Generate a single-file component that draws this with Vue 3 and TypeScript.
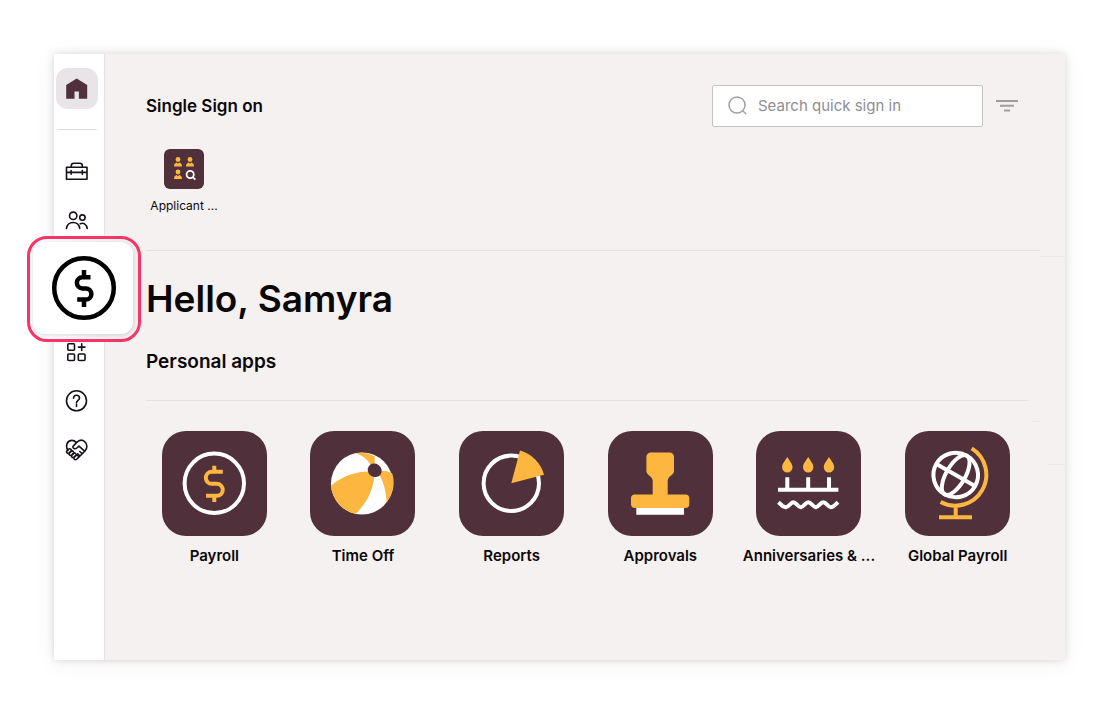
<script setup lang="ts">
import { ref } from 'vue'

interface AppTile {
  id: string
  label: string
}

const query = ref('')

const apps: AppTile[] = [
  { id: 'payroll', label: 'Payroll' },
  { id: 'timeoff', label: 'Time Off' },
  { id: 'reports', label: 'Reports' },
  { id: 'approvals', label: 'Approvals' },
  { id: 'anniversaries', label: 'Anniversaries & ...' },
  { id: 'global', label: 'Global Payroll' },
]
</script>

<template>
  <div class="page">
    <div class="window">
      <nav class="sidebar" aria-label="Main">
        <button class="home" type="button" aria-label="Home">
          <svg viewBox="0 0 24 24" class="icon"><path class="solid" d="M1.2 8 11.700 1.500 22.200 8v13.800h-8.300v-7.400H9.500v7.400H1.200z" /></svg>
        </button>
        <hr class="nav-rule" />
        <button class="nav-item" type="button" aria-label="Tools">
          <svg viewBox="0 0 24 24" class="icon"><path d="M1.500 8.300h20.500v11.900H1.500zM6.300 8.100V6.800c0-1.500 1-2.500 2.500-2.500h6c1.500 0 2.500 1 2.500 2.500v1.300M1.500 13.400h20.500M6.100 11.500v3.800M17.300 11.500v3.800" /></svg>
        </button>
        <button class="nav-item" type="button" aria-label="People">
          <svg viewBox="0 0 24 24" class="icon"><circle cx="8.200" cy="7.800" r="3.700" /><circle cx="17.400" cy="9.600" r="2.700" /><path d="M1.500 20.500c.5-3.800 3-6 6.600-6s6.100 2.200 6.600 6M15.200 15.800c3.500-1.500 6.500.6 7 4.700" /></svg>
        </button>
        <div class="focus-slot">
          <div class="focus-ring">
            <button class="focus-card" type="button" aria-label="Pay">
              <svg viewBox="0 0 68 68" class="pay-icon">
                <circle cx="34" cy="34" r="29.800" />
                <path d="M40.500 23.200H32.500a5.600 5.600 0 0 0 0 11.200h3.300a5.600 5.600 0 0 1 0 11.200H27.200M34 16v7M34 46v7" />
              </svg>
            </button>
          </div>
        </div>
        <button class="nav-item" type="button" aria-label="Add apps">
          <svg viewBox="0 0 24 24" class="icon"><rect x="2.800" y="3.800" width="6.700" height="6.500" rx="1" /><rect x="2.800" y="14" width="6.700" height="6.500" rx="1" /><rect x="13.300" y="14" width="6.700" height="6.500" rx="1" /><path d="M16.700 3.800v6.600M13.400 7.100h6.600" /></svg>
        </button>
        <button class="nav-item" type="button" aria-label="Help">
          <svg viewBox="0 0 24 24" class="icon"><circle cx="11.500" cy="11.800" r="10" /><path d="M8.500 9.300c0-1.900 1.200-3 3-3s3 1.100 3 2.700c0 2.200-3 2.400-3 4.900M11.500 15.600v1.900" /></svg>
        </button>
        <button class="nav-item" type="button" aria-label="Community">
          <svg viewBox="0 0 24 24" class="icon">
            <path d="M3 12.300C.2 8.500 1.700 3 6.500 2.400c2-.1 3.600.7 5 2.200 2.600-2.700 5.700-3 8.200-1 3 2.600 2.700 6.900.3 9.400l-6.200 6.200M11.500 4.600 8 8.400c-.6 1.900 2 3.200 3.800 1.600l2.200-1.900 5.800 5.200M17.300 15.800l-2.500-2.300M15 18l-2.300-2.200" />
            <g v-for="n in 4" :key="n" :transform="`translate(${1.600 + n * 2.400} ${11 + n * 2.100}) rotate(-45)`">
              <rect x="-2.600" y="-1.600" width="5.200" height="3.200" rx="1.600" />
            </g>
          </svg>
        </button>
      </nav>

      <main class="main">
        <section class="sso">
          <header class="sso-head">
            <h2 class="sso-title">Single Sign on</h2>
            <label class="search">
              <svg viewBox="0 0 22 22" class="search-icon"><circle cx="10" cy="10" r="8" /><path d="m15.800 15.800 3.400 3.400" /></svg>
              <input v-model="query" type="text" placeholder="Search quick sign in" aria-label="Search quick sign in" />
            </label>
            <button class="filter" type="button" aria-label="Filter">
              <svg viewBox="0 0 22 14"><path d="M0 2h22M4 6.800h14M8 11.500h6" /></svg>
            </button>
          </header>
          <a class="quick" href="#applicant">
            <svg viewBox="0 0 40 40" class="quick-icon">
              <g v-for="p in [[14, 8], [26, 8], [14, 20.500]]" :key="p.join()" :transform="`translate(${p[0]} ${p[1]})`" class="gold">
                <circle cx="0" cy="2.500" r="2.400" />
                <path d="M-4 9.500c0-2.500 1-3.600 2.800-4L0 6.700l1.200-1.200C3 5.900 4 7 4 9.500z" />
              </g>
              <circle class="lens" cx="26.200" cy="25.500" r="3.600" />
              <path class="lens" d="m28.800 28.100 2.600 2.600" />
            </svg>
            <span class="quick-label">Applicant ...</span>
          </a>
        </section>

        <section class="personal">
          <h1 class="hello">Hello, Samyra</h1>
          <h2 class="apps-title">Personal apps</h2>
        </section>

        <div class="apps">
          <a v-for="app in apps" :key="app.id" class="app" :href="`#${app.id}`">
            <svg viewBox="0 0 105 105" class="tile">
              <template v-if="app.id === 'payroll'">
                <circle class="line" cx="52.300" cy="52.300" r="29.700" />
                <path class="gold-line" d="M60.800 40.800H49.800a6 6 0 0 0 0 12h5a6 6 0 0 1 0 12H44M52.300 34.700v6M52.300 65v6" />
              </template>
              <template v-else-if="app.id === 'timeoff'">
                <circle class="white" cx="52" cy="52.500" r="31" />
                <path class="gold" d="M21.100 54.800C32 45 45 40.500 60 40.500l4.200 5C63 60 56 73 45.600 82.900A31 31 0 0 1 21.100 54.800z" />
                <path class="gold" d="M45.300 22.300a31 31 0 0 1 19.400 2.900v9h-3.500C57 28 52 24 45.300 22.300z" />
                <path class="gold" d="M70.500 40.300c4-.5 8 0 11.700 1.900a31 31 0 0 1-5.600 29C76 60 73.500 51 69.500 44z" />
                <ellipse class="dark" cx="64.700" cy="39.300" rx="7.200" ry="6.600" transform="rotate(35 64.700 39.300)" />
              </template>
              <template v-else-if="app.id === 'reports'">
                <circle class="line" cx="52.300" cy="52.300" r="27.700" />
                <path class="gold" d="M52.300 52.300 61 19.600a34 34 0 0 1 24 24.100z" />
              </template>
              <template v-else-if="app.id === 'approvals'">
                <path class="gold" d="M42.800 21.400h18.800a4.400 4.400 0 0 1 4.400 4.400v14.500c0 4-6.300 5-6.300 9.700v13.400h17.600a4 4 0 0 1 4 4V73a4 4 0 0 1-4 4H27a4 4 0 0 1-4-4v-5.600a4 4 0 0 1 4-4h17.700V50c0-4.700-6.300-5.700-6.300-9.700V25.800a4.400 4.400 0 0 1 4.400-4.400z" />
                <path class="white" d="M28.300 77H76v6.700H28.300z" />
              </template>
              <template v-else-if="app.id === 'anniversaries'">
                <path v-for="x in [31.300, 52.200, 73]" :key="x" class="gold" :transform="`translate(${x} 26)`" d="M0 0c2.500 4 5.200 7 5.200 10.200a5.200 5.200 0 0 1-10.400 0C-5.200 7-2.500 4 0 0z" />
                <path class="line" d="M31.300 46.300v12M52.200 46.300v12M73 46.300v12M22 58.700h60.400" />
                <path class="line" d="M22.400 71.200c2.400 2 4 5 7.400 5s4.700-5 7.500-5 4.700 5 7.500 5 4.700-5 7.500-5 4.700 5 7.500 5 4.700-5 7.500-5 4.700 5 7.500 5 5-3 7.200-5" />
              </template>
              <template v-else>
                <g transform="rotate(30 50.700 44)">
                  <circle class="line" cx="50.700" cy="44" r="22.300" />
                  <ellipse class="line" cx="50.700" cy="44" rx="9.500" ry="22.300" />
                  <path class="line" d="M28.500 44h44.400" />
                </g>
                <path class="gold-line" d="M66.700 17.400A31 31 0 0 1 35.600 71M50.700 75v11M34 86.300h33" />
              </template>
            </svg>
            <span class="app-label">{{ app.label }}</span>
          </a>
        </div>
      </main>
    </div>
  </div>
</template>

<style>
body {
  margin: 0;
  background: #ffffff;
}
</style>

<style scoped>
* {
  box-sizing: border-box;
}

.page {
  display: flex;
  min-height: 100vh;
  padding: 54px 43px 46px 54px;
  background: #ffffff;
  color: #0b0707;
  font-family: Inter, "Liberation Sans", sans-serif;
}

.window {
  display: flex;
  flex: 1;
  box-shadow: 0 0 8px rgba(0, 0, 0, 0.14), 0 3px 24px rgba(0, 0, 0, 0.05);
}

button {
  padding: 0;
  border: 0;
  background: none;
  color: inherit;
  font: inherit;
  cursor: pointer;
}

svg {
  display: block;
  flex: none;
}

h1,
h2 {
  margin: 0;
  font-weight: 600;
}

.sidebar {
  display: flex;
  flex-direction: column;
  align-items: center;
  flex: none;
  width: 51px;
  padding: 14px 4px 0 0;
  background: #ffffff;
  border-right: 1px solid #e6e3e4;
}

.home {
  display: grid;
  place-items: center;
  flex: none;
  width: 42px;
  height: 41px;
  border-radius: 12px;
  background: #e8e4e8;
}

.nav-rule {
  width: 40px;
  height: 1px;
  margin: 20px 0 16px;
  border: 0;
  background: #dfdddf;
}

.nav-item {
  display: grid;
  place-items: center;
  flex: none;
  width: 42px;
  height: 49px;
}

.icon {
  width: 24px;
  height: 24px;
  fill: none;
  stroke: #17111a;
  stroke-width: 1.6;
  stroke-linecap: round;
  stroke-linejoin: round;
}

.icon .solid {
  fill: #4f303b;
  stroke: none;
}

.focus-slot {
  position: relative;
  flex: none;
  width: 42px;
  height: 83px;
}

/* Enlarged menu entry that sits over the sidebar and the content */
.focus-ring {
  position: absolute;
  top: -8px;
  left: -29px;
  z-index: 2;
  width: 114px;
  height: 106px;
  padding: 3px;
  border: 3px solid #fb3468;
  border-radius: 20px;
  background: linear-gradient(90deg, #ffffff 20%, #f1efef 100%);
}

.focus-card {
  display: grid;
  place-items: center;
  width: 100px;
  height: 92px;
  padding-left: 2px;
  border-radius: 12px;
  background: #ffffff;
  box-shadow: 0 1px 5px rgba(0, 0, 0, 0.16);
}

.pay-icon {
  width: 68px;
  height: 68px;
  fill: none;
  stroke: #000000;
  stroke-width: 4.5;
}

/* Faint hairlines along the right edge */
.main {
  flex: 1;
  min-width: 0;
  padding: 0 25px 48px 35px;
  background:
    linear-gradient(#ebe8e8, #ebe8e8) right 0 top 202px / 25px 1px no-repeat,
    linear-gradient(#ebe8e8, #ebe8e8) right 25px top 367px / 8px 1px no-repeat,
    linear-gradient(#ebe8e8, #ebe8e8) right 0 top 410px / 17px 1px no-repeat,
    #f5f1f1;
}

.sso {
  margin-left: 6px;
  padding-top: 31px;
  height: 197px;
  border-bottom: 1px solid #e4e1e1;
}

.sso-head {
  display: flex;
  align-items: center;
  padding-right: 22px;
}

.sso-title {
  flex: 1;
  font-size: 17px;
  line-height: 24px;
}

.search {
  display: flex;
  align-items: center;
  gap: 9px;
  width: 271px;
  height: 42px;
  padding: 0 12px 0 14px;
  border: 1px solid #c5c2c4;
  border-radius: 2px;
  background: #ffffff;
}

.search-icon {
  width: 22px;
  height: 22px;
  fill: none;
  stroke: #a39fa2;
  stroke-width: 1.5;
}

.search input {
  flex: 1;
  min-width: 0;
  padding: 0;
  border: 0;
  outline: 0;
  background: none;
  color: #333333;
  font: 400 15px/20px Inter, "Liberation Sans", sans-serif;
}

.search input::placeholder {
  color: #918d90;
  opacity: 1;
}

.filter {
  margin-left: 13px;
}

.filter svg {
  width: 22px;
  height: 14px;
  fill: none;
  stroke: #a09c9f;
  stroke-width: 2;
}

.quick {
  display: flex;
  flex-direction: column;
  align-items: center;
  gap: 8px;
  width: 76px;
  margin-top: 22px;
  color: inherit;
  text-decoration: none;
}

.quick-icon {
  width: 40px;
  height: 40px;
  border-radius: 6px;
  background: #4f303b;
}

.lens {
  fill: none;
  stroke: #ffffff;
  stroke-width: 1.8;
}

.quick-label {
  font-size: 12px;
  line-height: 18px;
  white-space: nowrap;
}

.personal {
  margin: 0 12px 0 6px;
  padding: 24px 0 26px;
  border-bottom: 1px solid #e4e1e1;
}

.hello {
  font-size: 37px;
  line-height: 48px;
}

.apps-title {
  margin-top: 27px;
  font-size: 19px;
  line-height: 24px;
}

.apps {
  display: grid;
  grid-template-columns: repeat(6, 1fr);
  margin-right: 8px;
  padding-top: 30px;
}

.app {
  display: flex;
  flex-direction: column;
  align-items: center;
  gap: 10px;
  color: inherit;
  text-decoration: none;
}

.tile {
  width: 105px;
  height: 105px;
  border-radius: 24px;
  background: #4f303b;
}

.app-label {
  font-size: 15px;
  font-weight: 600;
  line-height: 20px;
  white-space: nowrap;
}

.gold {
  fill: #fdb740;
}

.white {
  fill: #ffffff;
}

.dark {
  fill: #4f303b;
}

.line {
  fill: none;
  stroke: #ffffff;
  stroke-width: 4;
}

.gold-line {
  fill: none;
  stroke: #fdb740;
  stroke-width: 4;
}
</style>
